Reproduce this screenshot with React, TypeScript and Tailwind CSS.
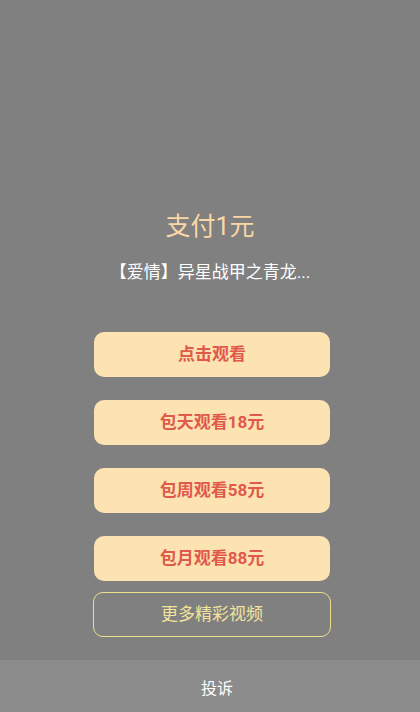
const FONT = "font-['Roboto','Noto_Sans_CJK_SC',sans-serif]";

const OPTIONS = ["点击观看", "包天观看18元", "包周观看58元", "包月观看88元"];

export default function App() {
    return (
        <div className={`flex h-[712px] w-[420px] flex-col bg-[#808080] ${FONT}`}>
            <div className="flex flex-1 flex-col items-center pt-[209px]">
                <h1 className="text-[25px] leading-[35px] text-[#fad7a5]">支付1元</h1>
                <p className="mt-[16px] text-[17px] leading-[24px] text-white">【爱情】异星战甲之青龙...</p>

                <div className="mt-[48px] ml-[4px] flex w-[236px] flex-col gap-[23px]">
                    {OPTIONS.map((label) => (
                        <button
                            key={label}
                            className="h-[45px] rounded-[10px] bg-[#fce3b1] text-[17px] font-bold text-[#e0594b]"
                        >
                            {label}
                        </button>
                    ))}
                </div>
                <button className="mt-[11px] ml-[4px] h-[45px] w-[238px] rounded-[10px] border-[1.5px] border-[#eedf8f] text-[17px] text-[#f3e39b]">
                    更多精彩视频
                </button>
            </div>
            <div className="flex h-[52px] items-center justify-center bg-[#8c8c8c] pt-[5px] pl-[14px] text-[16px] text-white">
                投诉
            </div>
        </div>
    );
}
